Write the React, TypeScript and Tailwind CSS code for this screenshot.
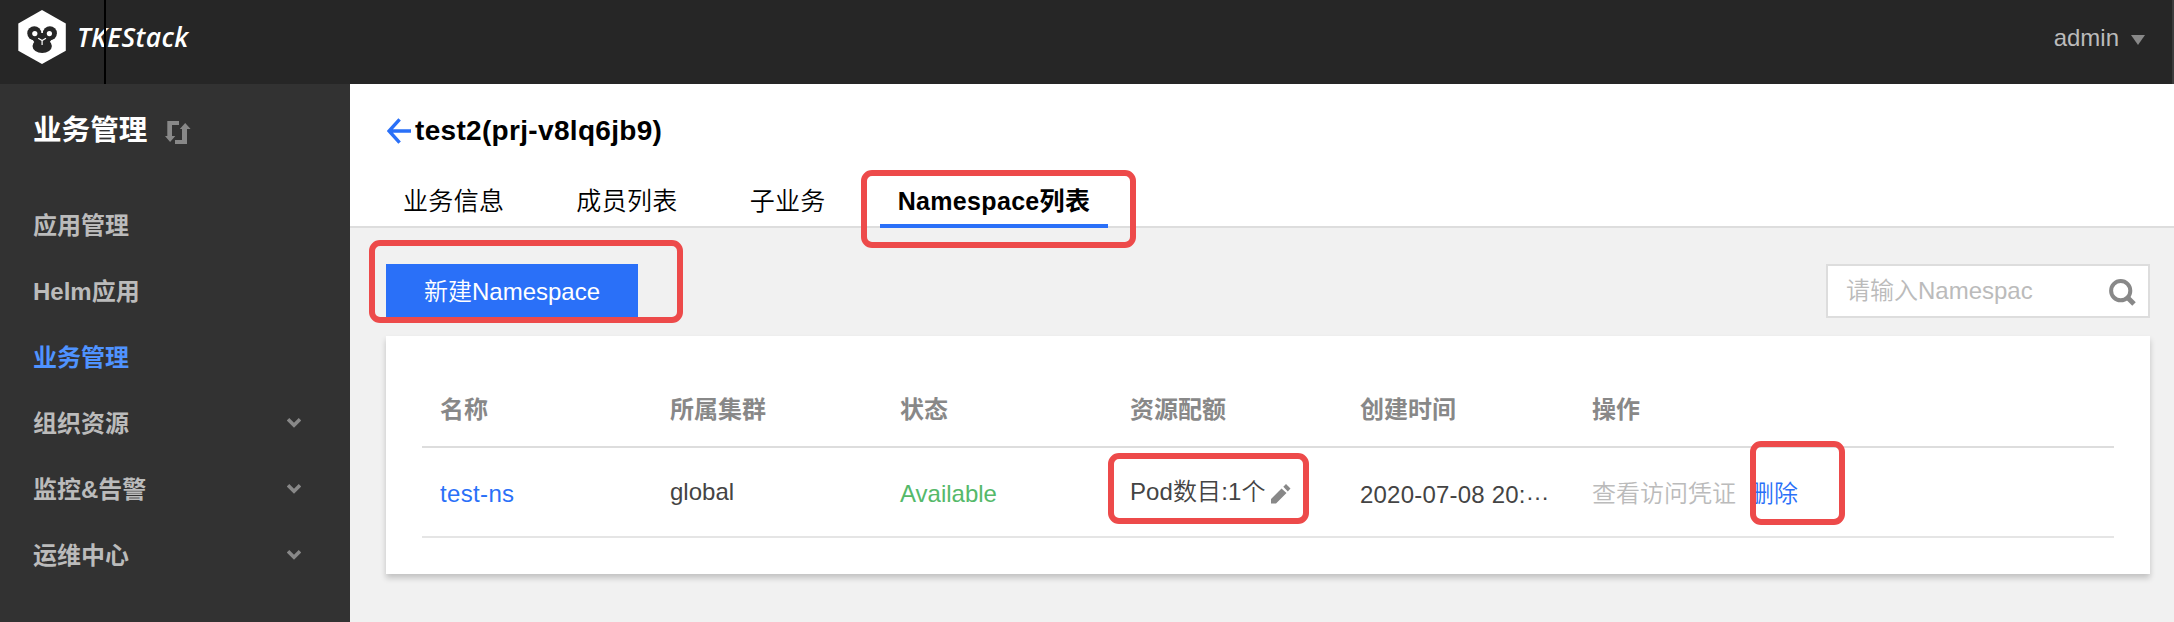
import type { ReactNode } from "react";

const cjk = "font-['Liberation_Sans','Noto_Sans_CJK_SC',sans-serif]";

function Logo() {
  return (
    <svg className="absolute left-[18px] top-[9px]" width="49" height="56" viewBox="0 0 49 56">
      <path d="M24 1 L47.8 14.4 V41.8 L24 55 L0.3 41.8 V14.4 Z" fill="#fff" />
      <circle cx="16.3" cy="24.3" r="7" fill="#262626" />
      <circle cx="31.9" cy="24.3" r="7" fill="#262626" />
      <path d="M19 24 H29 L34 30 L31 34 H17 L14 30 Z" fill="#262626" />
      <ellipse cx="24.2" cy="37" rx="9.7" ry="7" fill="#262626" />
      <circle cx="16.8" cy="24.6" r="2.6" fill="#fff" />
      <circle cx="31.4" cy="24.6" r="2.6" fill="#fff" />
      <path d="M20.2 29.3 L24.1 31.6 L28 29.3 M24.1 31.6 V36" fill="none" stroke="#fff" strokeWidth="1.2" />
    </svg>
  );
}

function SwapIcon() {
  return (
    <svg width="26" height="23" viewBox="0 0 26 23" fill="#888">
      <path d="M2.3 0 H14 V4 H7 V15 H10.3 L5.1 21 L0 15 H2.3 Z" />
      <path d="M10 19 H17 V8 H14.8 L20.2 2 L25.6 8 H22 V23 H10 Z" />
    </svg>
  );
}

function Chevron() {
  return (
    <svg className="-mt-[3px]" width="14" height="10" viewBox="0 0 14 10" fill="none" stroke="#888" strokeWidth="3.6">
      <path d="M1 1.3 L7 7.3 L13 1.3" />
    </svg>
  );
}

const menu: { label: string; active?: boolean; expandable?: boolean }[] = [
  { label: "应用管理" },
  { label: "Helm应用" },
  { label: "业务管理", active: true },
  { label: "组织资源", expandable: true },
  { label: "监控&告警", expandable: true },
  { label: "运维中心", expandable: true },
];

function Highlight({ className }: { className: string }) {
  return <div className={`absolute rounded-[11px] border-[6px] border-[#ed4a4a] ${className}`} />;
}

function Cell({ children, className = "" }: { children: ReactNode; className?: string }) {
  return <div className={`flex items-center whitespace-nowrap ${className}`}>{children}</div>;
}

const columns = "grid grid-cols-[230px_230px_230px_230px_232px_1fr] pl-[18px]";

export default function App() {
  return (
    <div className={`relative flex h-[622px] w-[2174px] flex-col overflow-hidden bg-[#f1f1f1] text-[24px] leading-none font-[350] ${cjk}`}>
      <header className="relative flex h-[84px] shrink-0 items-center justify-between border-r-2 border-[#3c3c3c] bg-[#262626]">
        <Logo />
        <span className="ml-[77px] mt-[-9px] font-['Open_Sans'] text-[26.5px] font-semibold italic tracking-[0.4px] text-white">TKEStack</span>
        <div className="absolute left-[104px] top-0 h-[84px] w-[2px] bg-black" />
        <div className="mt-[-8px] flex items-center gap-[12px] pr-[27px] text-[#bbb]">
          <span>admin</span>
          <svg width="14" height="10" viewBox="0 0 14 10" className="mt-[3px]"><path d="M0 0 H14 L7 10 Z" fill="#888" /></svg>
        </div>
      </header>
      <div className="flex min-h-0 flex-1">
        <aside className="flex w-[350px] shrink-0 flex-col bg-[#323232]">
          <div className="flex h-[109px] items-start gap-[17px] pl-[33px] pt-[32px]">
            <h1 className="w-[115px] whitespace-nowrap text-[28.6px] font-bold leading-[28px] text-white">业务管理</h1>
            <div className="pt-[5px]"><SwapIcon /></div>
          </div>
          <nav className="flex flex-col">
            {menu.map((m) => (
              <div key={m.label} className={`flex h-[66px] items-center justify-between pl-[33px] pr-[49px] font-bold ${m.active ? "text-[#4f93ff]" : "text-[#bbb]"}`}>
                <span>{m.label}</span>
                {m.expandable && <Chevron />}
              </div>
            ))}
          </nav>
        </aside>
        <main className="flex min-w-0 flex-1 flex-col">
          <div className="flex h-[144px] shrink-0 flex-col justify-between border-b-2 border-[#ddd] bg-white pl-[35px]">
            <div className="flex items-center gap-[4px] pl-[2px] pt-[33px]">
              <svg width="24" height="26" viewBox="0 0 24 26" fill="none" stroke="#2a70f8" strokeWidth="3.4"><path d="M12.6 1.3 L2 13 L12.6 24.7 M1.5 13 H24" /></svg>
              <h2 className="text-[28px] font-bold leading-[28px] tracking-[0.32px] text-black">test2(prj-v8lq6jb9)</h2>
            </div>
            <div className="-mb-[2px] flex h-[66px] gap-[36px] text-[25px] tracking-[0.33px] text-black">
              {["业务信息", "成员列表", "子业务"].map((t) => (
                <div key={t} className="px-[18px] pt-[27px]">{t}</div>
              ))}
              <div className="border-b-4 border-[#2a70f8] px-[18px] pt-[27px] font-bold">Namespace列表</div>
            </div>
          </div>
          <div className="flex flex-col gap-[18px] pl-[36px] pr-[24px] pt-[36px]">
            <div className="flex justify-between">
              <button className="h-[54px] w-[252px] bg-[#2a70f8] pt-[2px] text-white">新建Namespace</button>
              <div className="flex h-[54px] w-[324px] items-center justify-between border-2 border-[#ddd] bg-white pl-[18px] pr-[12px] text-[#bbb]">
                <span>请输入Namespac</span>
                <svg className="mt-[3px]" width="27" height="27" viewBox="0 0 27 27" fill="none" stroke="#888" strokeWidth="4"><circle cx="11.7" cy="11.7" r="9.6" /><path d="M18 18 L25 25" strokeWidth="5" /></svg>
              </div>
            </div>
            <section className="h-[238px] bg-white px-[36px] pt-[36px] shadow-[0_4px_6px_rgba(0,0,0,0.2)]">
              <div className={`${columns} h-[76px] border-b-2 border-[#ddd] pt-[2px] font-bold text-[#888]`}>
                {["名称", "所属集群", "状态", "资源配额", "创建时间", "操作"].map((h) => <Cell key={h}>{h}</Cell>)}
              </div>
              <div className={`${columns} h-[90px] border-b-2 border-[#e5e5e5] text-[#444]`}>
                <Cell className="pt-[4px] tracking-[0.35px] text-[#2a70f8]">test-ns</Cell>
                <Cell>global</Cell>
                <Cell className="pt-[4px] text-[#55b96a]">Available</Cell>
                <Cell className="tracking-[0.1px]">Pod数目:1个
                  <svg className="ml-[5px] mt-[4px]" width="20" height="20" viewBox="0 0 20 20" fill="#888"><path d="M0 15 L10.5 4.5 L15.5 9 L5 19.5 H0 Z M12.3 2.8 L15 0 L19.5 4.5 L16.8 7.4 Z" /></svg>
                </Cell>
                <Cell className="pt-[6px] tracking-[0.2px]">2020-07-08 20:<span className="-mt-[6px]">…</span></Cell>
                <Cell className="gap-[14px] pt-[4px]"><span className="text-[#bbb]">查看访问凭证</span><span className="text-[#2a70f8]">删除</span></Cell>
              </div>
            </section>
          </div>
        </main>
      </div>
      <Highlight className="left-[369px] top-[240px] h-[83px] w-[314px]" />
      <Highlight className="left-[861px] top-[170px] h-[78px] w-[275px]" />
      <Highlight className="left-[1108px] top-[453px] h-[71px] w-[201px]" />
      <Highlight className="left-[1750px] top-[441px] h-[84px] w-[95px]" />
    </div>
  );
}
